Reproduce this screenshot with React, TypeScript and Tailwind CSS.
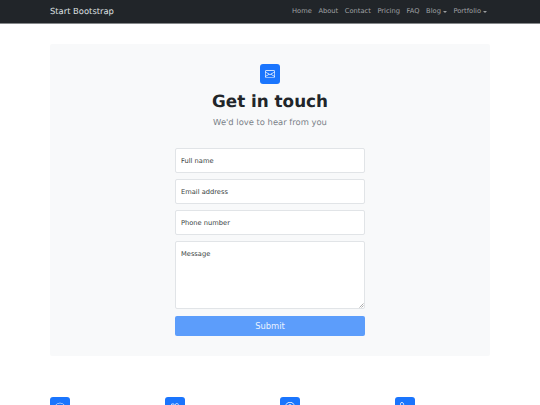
import { BsChatDots, BsEnvelope, BsPeople, BsQuestionCircle, BsTelephone } from "react-icons/bs";

const navLinks = ["Home", "About", "Contact", "Pricing", "FAQ"];

const fieldClass =
  "block w-full rounded-[2px] border border-[#e1e4e7] bg-white px-[5px] text-[6.7px] text-[#3a3f44] placeholder:text-[#3a3f44] outline-none";

const Caret = () => (
  <span className="ml-[2px] inline-block h-0 w-0 border-x-[2px] border-t-[2px] border-x-transparent border-t-[#9a9da0] align-middle" />
);

const FeatureIcon = ({ children }: { children: React.ReactNode }) => (
  <div className="flex h-5 w-5 items-center justify-center rounded-[3px] bg-[#1a75fd] text-[10px] text-white">
    {children}
  </div>
);

export default function App() {
  return (
    <div className="h-[405px] overflow-hidden bg-white font-['DejaVu_Sans',sans-serif] text-[#212529] [text-rendering:geometricPrecision]">
      <nav className="h-6 border-b border-[#85888a] bg-[#212529]">
        <div className="flex h-[23px] items-center justify-between pr-[53px] pl-[50px]">
          <span className="text-[8.4px] text-[#dfe0e1]">Start Bootstrap</span>
          <ul className="flex items-center gap-[6.6px] text-[6.7px] text-[#a0a3a5]">
            {navLinks.map((l) => (
              <li key={l}>{l}</li>
            ))}
            <li>
              Blog
              <Caret />
            </li>
            <li>
              Portfolio
              <Caret />
            </li>
          </ul>
        </div>
      </nav>

      <main className="px-[50px] pt-5">
        <section className="h-[312px] rounded-[2px] bg-[#f8f9fa] pt-5">
          <div className="flex flex-col items-center">
            <FeatureIcon>
              <BsEnvelope />
            </FeatureIcon>
            <h1 className="mt-[5px] text-[16.8px] leading-[24px] font-bold">Get in touch</h1>
            <p className="mt-[2px] text-[8.4px] leading-[14px] text-[#7a8188]">We'd love to hear from you</p>
          </div>
          <form className="mx-auto mt-[19px] flex w-[190px] flex-col">
            <input className={`${fieldClass} h-[25px]`} placeholder="Full name" />
            <input className={`${fieldClass} mt-[6px] h-[25px]`} placeholder="Email address" />
            <input className={`${fieldClass} mt-[6px] h-[25px]`} placeholder="Phone number" />
            <div className="relative mt-[6px]">
              <textarea className={`${fieldClass} h-[68px] resize-none pt-[7px]`} placeholder="Message" />
              <svg className="absolute right-[1px] bottom-[1px]" width="5" height="5" viewBox="0 0 5 5">
                <path d="M0.5 4.5L4.5 0.5M2.5 4.5L4.5 2.5" stroke="#8a8a8a" strokeWidth="0.7" />
              </svg>
            </div>
            <button
              type="button"
              className="mt-[7px] h-5 rounded-[2px] bg-[#5c9dfb] text-[8.4px] text-[#eaf2fe]"
            >
              Submit
            </button>
          </form>
        </section>

        <div className="mt-[41px] flex gap-[95px]">
          <FeatureIcon>
            <BsChatDots />
          </FeatureIcon>
          <FeatureIcon>
            <BsPeople />
          </FeatureIcon>
          <FeatureIcon>
            <BsQuestionCircle />
          </FeatureIcon>
          <FeatureIcon>
            <BsTelephone />
          </FeatureIcon>
        </div>
      </main>
    </div>
  );
}
